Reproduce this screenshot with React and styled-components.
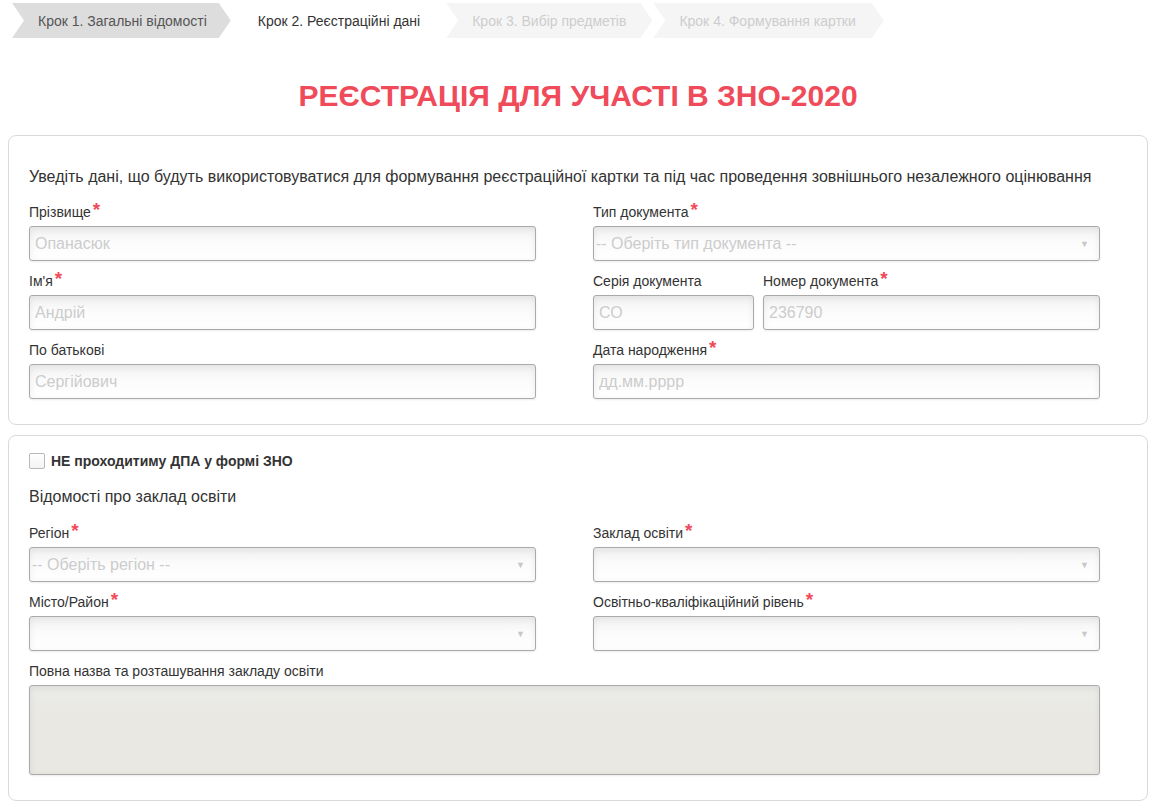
import React from "react";
import styled, { createGlobalStyle, css } from "styled-components";

const Global = createGlobalStyle`
  html, body { margin: 0; padding: 0; background: #fff; }
  body { font-family: "Liberation Sans", Arial, sans-serif; color: #333; }
  * { box-sizing: border-box; }
`;

const Page = styled.div`
  padding: 3px 8px 8px;
`;

const Steps = styled.nav`
  display: flex;
  gap: 1px;
  padding-left: 4px;
`;

const Step = styled.div`
  height: 35px;
  display: flex;
  align-items: center;
  padding: 0 ${(p) => p.$pr}px 0 26px;
  font-size: 14px;
  white-space: nowrap;
  clip-path: polygon(0 0, calc(100% - 12px) 0, 100% 50%, calc(100% - 12px) 100%, 0 100%, 12px 50%);
  ${(p) =>
    p.$state === "done" &&
    css`
      background: #dddddd;
      color: #555;
    `}
  ${(p) =>
    p.$state === "current" &&
    css`
      background: #fff;
      color: #333;
    `}
  ${(p) =>
    p.$state === "todo" &&
    css`
      background: #f5f5f5;
      color: #cdcdcd;
    `}
`;

const Title = styled.h1`
  margin: 41px 0 22px;
  text-align: center;
  font-size: 30px;
  line-height: 34px;
  font-weight: bold;
  color: #ef4b5b;
`;

const Panel = styled.section`
  border: 1px solid #d9d9d9;
  border-radius: 8px;
  padding: ${(p) => p.$pt}px 20px 25px;
  & + & { margin-top: 10px; }
`;

const Intro = styled.p`
  margin: 0 0 15px;
  font-size: 16px;
  line-height: 20px;
  color: #333;
  white-space: nowrap;
`;

const Heading = styled.p`
  margin: 0 0 16px;
  font-size: 16px;
  line-height: 20px;
  color: #333;
`;

const Grid = styled.div`
  display: grid;
  grid-template-columns: 507px 507px;
  column-gap: 57px;
  row-gap: 10px;
`;

const Field = styled.div`
  display: flex;
  flex-direction: column;
  gap: 4px;
  min-width: 0;
  ${(p) => p.$wide && css`grid-column: 1 / -1;`}
`;

const Pair = styled.div`
  display: grid;
  grid-template-columns: 161px 1fr;
  column-gap: 9px;
`;

const Label = styled.label`
  font-size: 14px;
  line-height: 20px;
  height: 20px;
  color: #333;
  white-space: nowrap;
`;

const Star = styled.span`
  color: #f04b5b;
  font-size: 19px;
  font-weight: bold;
  line-height: 10px;
  margin-left: 2px;
  position: relative;
  top: -1px;
`;

const boxBase = css`
  border: 1px solid #aaa;
  border-radius: 3px;
  box-shadow: inset 0 2px 7px rgba(0, 0, 0, 0.07), 0 1px 2px rgba(0, 0, 0, 0.08);
  background: linear-gradient(#f1f1f1 0%, #fbfbfb 45%, #fff 100%);
`;

const Input = styled.div`
  ${boxBase}
  height: 35px;
  display: flex;
  align-items: center;
  padding: 0 5px;
  font-size: 16px;
  color: #cccccc;
  white-space: nowrap;
  overflow: hidden;
`;

const Select = styled(Input)`
  padding: 0 10px 0 2px;
  justify-content: space-between;
`;

const Arrow = styled.span`
  font-size: 9px;
  color: #c8c8c8;
`;

const TextArea = styled.div`
  ${boxBase}
  height: 90px;
  background: linear-gradient(#ebebe8 0%, #e9e8e2 40%, #e9e8e2 100%);
`;

const CheckRow = styled.div`
  display: flex;
  align-items: center;
  gap: 6px;
  height: 20px;
  margin-bottom: 16px;
`;

const Box = styled.span`
  width: 16px;
  height: 16px;
  border: 1px solid #b9b9b9;
  border-radius: 2px;
  background: linear-gradient(#fff, #f3f3f3);
`;

const CheckText = styled.span`
  font-size: 14px;
  font-weight: bold;
  color: #333;
`;

const Req = () => <Star>*</Star>;

function TextField({ label, required, placeholder }) {
  return (
    <Field>
      <Label>
        {label}
        {required && <Req />}
      </Label>
      <Input>{placeholder}</Input>
    </Field>
  );
}

function SelectField({ label, required, placeholder }) {
  return (
    <Field>
      <Label>
        {label}
        {required && <Req />}
      </Label>
      <Select>
        <span>{placeholder}</span>
        <Arrow>▼</Arrow>
      </Select>
    </Field>
  );
}

export default function App() {
  return (
    <Page>
      <Global />
      <Steps>
        <Step $state="done" $pr={24}>Крок 1. Загальні відомості</Step>
        <Step $state="current" $pr={25}>Крок 2. Реєстраційні дані</Step>
        <Step $state="todo" $pr={26}>Крок 3. Вибір предметів</Step>
        <Step $state="todo" $pr={28}>Крок 4. Формування картки</Step>
      </Steps>

      <Title>РЕЄСТРАЦІЯ ДЛЯ УЧАСТІ В ЗНО-2020</Title>

      <Panel $pt={31}>
        <Intro>
          Уведіть дані, що будуть використовуватися для формування реєстраційної картки та під час
          проведення зовнішнього незалежного оцінювання
        </Intro>
        <Grid>
          <TextField label="Прізвище" required placeholder="Опанасюк" />
          <SelectField label="Тип документа" required placeholder="-- Оберіть тип документа --" />
          <TextField label="Ім'я" required placeholder="Андрій" />
          <Pair>
            <TextField label="Серія документа" placeholder="СО" />
            <TextField label="Номер документа" required placeholder="236790" />
          </Pair>
          <TextField label="По батькові" placeholder="Сергійович" />
          <TextField label="Дата народження" required placeholder="дд.мм.рррр" />
        </Grid>
      </Panel>

      <Panel $pt={15}>
        <CheckRow>
          <Box />
          <CheckText>НЕ проходитиму ДПА у формі ЗНО</CheckText>
        </CheckRow>
        <Heading>Відомості про заклад освіти</Heading>
        <Grid>
          <SelectField label="Регіон" required placeholder="-- Оберіть регіон --" />
          <SelectField label="Заклад освіти" required placeholder="" />
          <SelectField label="Місто/Район" required placeholder="" />
          <SelectField label="Освітньо-кваліфікаційний рівень" required placeholder="" />
          <Field $wide>
            <Label>Повна назва та розташування закладу освіти</Label>
            <TextArea />
          </Field>
        </Grid>
      </Panel>
    </Page>
  );
}
